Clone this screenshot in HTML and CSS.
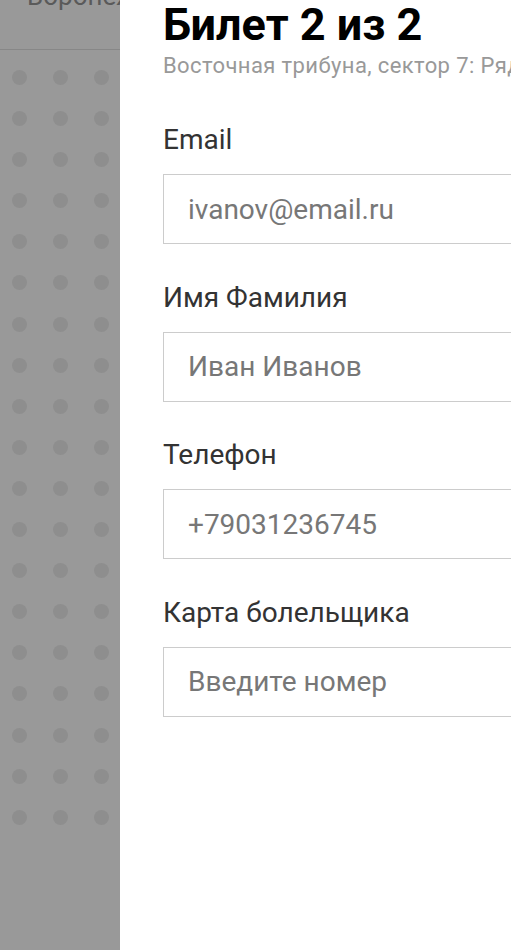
FILE: index.html
```html
<!DOCTYPE html>
<html lang="ru">
<head>
<meta charset="utf-8">
<title>Билет 2 из 2</title>
<link rel="stylesheet" href="styles.css">
</head>
<body>
<div class="screen">
  <aside class="backdrop">
    <div class="city-bar"><span class="city">Воронеж</span></div>
    <div class="dots">
      <span></span><span></span><span></span>
      <span></span><span></span><span></span>
      <span></span><span></span><span></span>
      <span></span><span></span><span></span>
      <span></span><span></span><span></span>
      <span></span><span></span><span></span>
      <span></span><span></span><span></span>
      <span></span><span></span><span></span>
      <span></span><span></span><span></span>
      <span></span><span></span><span></span>
      <span></span><span></span><span></span>
      <span></span><span></span><span></span>
      <span></span><span></span><span></span>
      <span></span><span></span><span></span>
      <span></span><span></span><span></span>
      <span></span><span></span><span></span>
      <span></span><span></span><span></span>
      <span></span><span></span><span></span>
      <span></span><span></span><span></span>
    </div>
  </aside>
  <main class="drawer">
    <h1 class="title">Билет 2 из 2</h1>
    <p class="subtitle">Восточная трибуна, сектор 7: Ряд 12, место 14</p>
    <form class="form">
      <label class="field">
        <span class="label">Email</span>
        <input class="input" type="text" value="ivanov@email.ru">
      </label>
      <label class="field">
        <span class="label">Имя Фамилия</span>
        <input class="input" type="text" value="Иван Иванов">
      </label>
      <label class="field">
        <span class="label">Телефон</span>
        <input class="input" type="text" value="+79031236745">
      </label>
      <label class="field">
        <span class="label">Карта болельщика</span>
        <input class="input" type="text" placeholder="Введите номер">
      </label>
    </form>
  </main>
</div>
</body>
</html>
```

FILE: styles.css
```css
html, body {
  margin: 0;
  padding: 0;
  height: 100%;
  overflow: hidden;
  background: #ffffff;
  font-family: Roboto, "Noto Sans", "Liberation Sans", sans-serif;
}

.screen {
  display: flex;
  width: 511px;
  height: 950px;
  overflow: hidden;
}

.backdrop {
  flex: 0 0 120px;
  width: 120px;
  height: 950px;
  background: #999999;
  overflow: hidden;
}

.city-bar {
  height: 50px;
  border-bottom: 1px solid #878787;
  box-sizing: border-box;
  overflow: hidden;
}

.city {
  display: block;
  margin-top: -19px;
  padding-left: 27px;
  font-size: 26px;
  line-height: 30px;
  color: #5a5a5a;
  white-space: nowrap;
}

.dots {
  display: grid;
  grid-template-columns: repeat(3, 15px);
  grid-auto-rows: 15px;
  column-gap: 26px;
  row-gap: 26.1px;
  padding: 20px 0 0 11.5px;
}

.dots span {
  display: block;
  width: 15px;
  height: 15px;
  border-radius: 50%;
  background: #8e8e8e;
}

.drawer {
  flex: 0 0 auto;
  width: 460px;
  padding: 1px 0 0 43px;
  box-sizing: border-box;
  background: #ffffff;
  overflow: hidden;
}

.title {
  margin: 0;
  font-size: 45px;
  line-height: 48px;
  font-weight: 700;
  color: #000000;
  white-space: nowrap;
}

.subtitle {
  margin: 4.5px 0 0;
  font-size: 22px;
  line-height: 24px;
  letter-spacing: 0.4px;
  color: #999999;
  white-space: nowrap;
}

.form {
  display: flex;
  flex-direction: column;
  gap: 37.5px;
  margin-top: 46.5px;
}

.field {
  display: flex;
  flex-direction: column;
  gap: 18px;
}

.label {
  font-size: 28px;
  line-height: 32px;
  color: #333333;
  white-space: nowrap;
}

.input {
  display: block;
  width: 420px;
  height: 70px;
  box-sizing: border-box;
  margin: 0;
  padding: 0 0 0 24px;
  border: 1px solid #cccccc;
  border-radius: 0;
  outline: none;
  background: #ffffff;
  font-family: Roboto, "Noto Sans", "Liberation Sans", sans-serif;
  font-size: 28px;
  color: #777777;
}

.input::placeholder {
  color: #777777;
  opacity: 1;
}
```
